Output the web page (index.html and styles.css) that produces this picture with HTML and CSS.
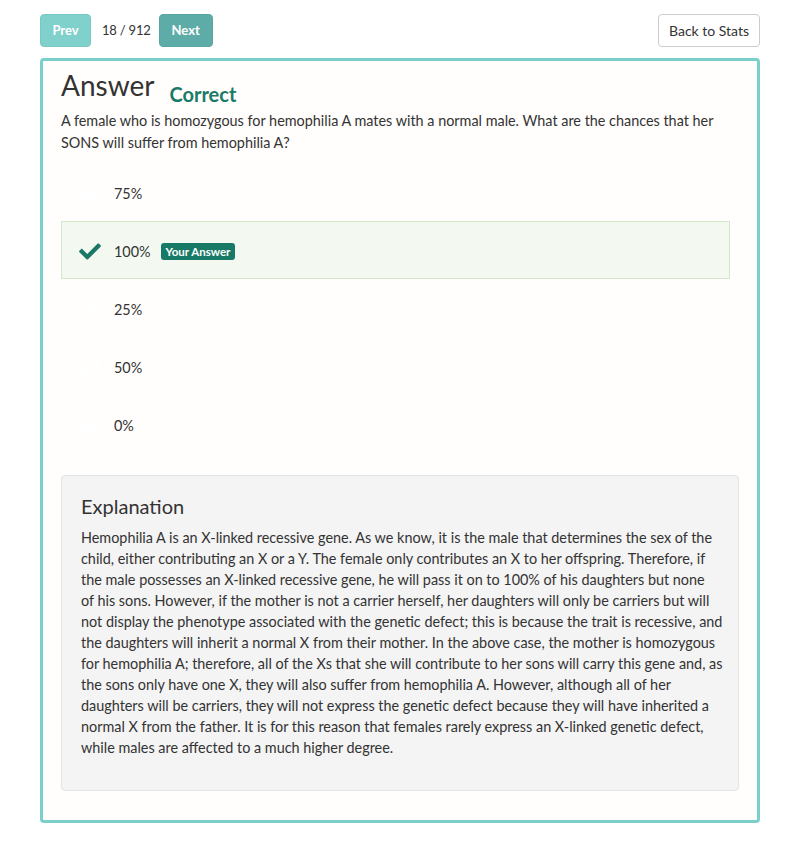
FILE: index.html
```html
<!DOCTYPE html>
<html lang="en">
<head>
<meta charset="utf-8">
<title>Answer</title>
<link rel="stylesheet" href="styles.css">
</head>
<body>
<div class="page">
  <div class="toolbar">
    <div class="nav">
      <button class="btn btn-prev">Prev</button>
      <span class="count">18 / 912</span>
      <button class="btn btn-next">Next</button>
    </div>
    <button class="btn btn-back">Back to Stats</button>
  </div>

  <div class="card">
    <div class="title">
      <h2>Answer</h2>
      <span class="status">Correct</span>
    </div>
    <p class="question">A female who is homozygous for hemophilia A mates with a normal male. What are the chances that her<br>SONS will suffer from hemophilia A?</p>

    <ul class="options">
      <li class="option">
        <svg class="check" viewBox="0 0 512 400"><path d="M173.9 383.4l-166.4-166.4c-10-10-10-26.2 0-36.2l36.2-36.2c10-10 26.2-10 36.2 0L192 256.7 432.1 16.6c10-10 26.2-10 36.2 0l36.2 36.2c10 10 10 26.2 0 36.2l-294.4 294.4c-10 10-26.2 10-36.2 0z"/></svg>
        <span>75%</span>
      </li>
      <li class="option selected">
        <svg class="check" viewBox="0 0 512 400"><path d="M173.9 383.4l-166.4-166.4c-10-10-10-26.2 0-36.2l36.2-36.2c10-10 26.2-10 36.2 0L192 256.7 432.1 16.6c10-10 26.2-10 36.2 0l36.2 36.2c10 10 10 26.2 0 36.2l-294.4 294.4c-10 10-26.2 10-36.2 0z"/></svg>
        <span>100%</span>
        <span class="badge">Your Answer</span>
      </li>
      <li class="option">
        <svg class="check" viewBox="0 0 512 400"><path d="M173.9 383.4l-166.4-166.4c-10-10-10-26.2 0-36.2l36.2-36.2c10-10 26.2-10 36.2 0L192 256.7 432.1 16.6c10-10 26.2-10 36.2 0l36.2 36.2c10 10 10 26.2 0 36.2l-294.4 294.4c-10 10-26.2 10-36.2 0z"/></svg>
        <span>25%</span>
      </li>
      <li class="option">
        <svg class="check" viewBox="0 0 512 400"><path d="M173.9 383.4l-166.4-166.4c-10-10-10-26.2 0-36.2l36.2-36.2c10-10 26.2-10 36.2 0L192 256.7 432.1 16.6c10-10 26.2-10 36.2 0l36.2 36.2c10 10 10 26.2 0 36.2l-294.4 294.4c-10 10-26.2 10-36.2 0z"/></svg>
        <span>50%</span>
      </li>
      <li class="option">
        <svg class="check" viewBox="0 0 512 400"><path d="M173.9 383.4l-166.4-166.4c-10-10-10-26.2 0-36.2l36.2-36.2c10-10 26.2-10 36.2 0L192 256.7 432.1 16.6c10-10 26.2-10 36.2 0l36.2 36.2c10 10 10 26.2 0 36.2l-294.4 294.4c-10 10-26.2 10-36.2 0z"/></svg>
        <span>0%</span>
      </li>
    </ul>

    <div class="explanation">
      <h3>Explanation</h3>
      <p>Hemophilia A is an X-linked recessive gene. As we know, it is the male that determines the sex of the<br>child, either contributing an X or a Y. The female only contributes an X to her offspring. Therefore, if<br>the male possesses an X-linked recessive gene, he will pass it on to 100% of his daughters but none<br>of his sons. However, if the mother is not a carrier herself, her daughters will only be carriers but will<br>not display the phenotype associated with the genetic defect; this is because the trait is recessive, and<br>the daughters will inherit a normal X from their mother. In the above case, the mother is homozygous<br>for hemophilia A; therefore, all of the Xs that she will contribute to her sons will carry this gene and, as<br>the sons only have one X, they will also suffer from hemophilia A. However, although all of her<br>daughters will be carriers, they will not express the genetic defect because they will have inherited a<br>normal X from the father. It is for this reason that females rarely express an X-linked genetic defect,<br>while males are affected to a much higher degree.</p>
    </div>
  </div>
</div>
</body>
</html>
```

FILE: styles.css
```css
* { box-sizing: border-box; }

html, body {
  margin: 0;
  padding: 0;
  background: #ffffff;
}

body {
  font-family: Lato, "Open Sans", sans-serif;
  font-size: 14.4px;
  line-height: 21px;
  color: #333333;
}

.page {
  padding: 14px 40px 24px;
}

.toolbar {
  display: flex;
  justify-content: space-between;
  align-items: center;
  margin-bottom: 11px;
}

.nav {
  display: flex;
  align-items: center;
}

.count {
  margin: 0 8px 0 11px;
  font-size: 13px;
  letter-spacing: -0.2px;
  color: #333;
}

.btn {
  font-family: inherit;
  height: 33px;
  border-radius: 4px;
  padding: 0;
  font-size: 13px;
  cursor: pointer;
  line-height: 31px;
}

.btn-prev {
  background: #80d0cc;
  border: 1px solid #78c8c4;
  color: #ffffff;
  font-weight: 700;
  width: 51px;
}

.btn-next {
  background: #5eaca8;
  border: 1px solid #58a5a1;
  color: #ffffff;
  font-weight: 700;
  width: 54px;
}

.btn-back {
  background: #ffffff;
  border: 1px solid #cccccc;
  color: #333333;
  font-size: 14px;
  width: 102px;
}

.card {
  border: 3px solid #7bcfcb;
  border-radius: 4px;
  background: #fffefc;
  padding: 8px 18px 9px;
}

.title {
  display: flex;
  align-items: flex-end;
}

.title h2 {
  margin: 0;
  font-size: 28px;
  line-height: 33px;
  font-weight: 400;
  color: #333;
}

.status {
  margin-left: 15px;
  margin-bottom: -4px;
  font-size: 20px;
  line-height: 24px;
  font-weight: 700;
  color: #1b7a66;
}

.question {
  margin: 8px 0 9px;
  line-height: 22px;
  white-space: nowrap;
}

.options {
  list-style: none;
  margin: 0 9px 22px 0;
  padding: 0;
}

.option {
  display: flex;
  align-items: center;
  height: 58px;
  padding: 3px 17px 0;
  border: 1px solid transparent;
}

.option.selected {
  background: #f3f9f1;
  border-color: #d3e7cb;
}

.check {
  width: 22px;
  height: 17px;
  margin-right: 13px;
  fill: #ffffff;
  flex-shrink: 0;
}

.selected .check {
  fill: #1b7766;
}

.badge {
  margin-left: 10px;
  background: #177a66;
  color: #ffffff;
  font-size: 11.5px;
  font-weight: 700;
  line-height: 17px;
  padding: 0 5px;
  border-radius: 3px;
}

.explanation {
  background: #f4f4f4;
  border: 1px solid #e3e3e3;
  border-radius: 4px;
  padding: 19px 19px 21px;
  margin-bottom: 20px;
}

.explanation h3 {
  margin: 0 0 10px;
  font-size: 20px;
  line-height: 22px;
  font-weight: 400;
  color: #333;
}

.explanation p {
  margin: 0 0 11px;
  line-height: 21px;
  white-space: nowrap;
}
```
